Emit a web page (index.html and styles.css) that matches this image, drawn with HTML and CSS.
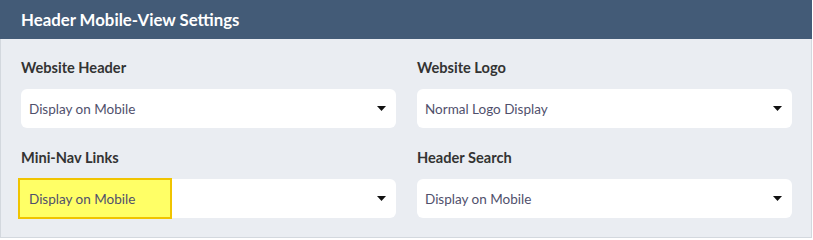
FILE: index.html
```html
<!DOCTYPE html>
<html lang="en">

<head>
    <meta charset="UTF-8">
    <meta name="viewport" content="width=device-width, initial-scale=1.0">
    <title>Header Mobile-View Settings</title>
    <link rel="stylesheet" href="styles.css">
</head>

<body>

    <div class="panel">
        <div class="panel-head">Header Mobile-View Settings</div>

        <div class="panel-body">
            <div class="field">
                <div class="label">Website Header</div>
                <div class="select">
                    <span class="value">Display on Mobile</span>
                    <svg class="caret" width="9" height="5" viewBox="0 0 9 5"><path d="M0 0h9L4.5 5z" /></svg>
                </div>
            </div>

            <div class="field">
                <div class="label">Website Logo</div>
                <div class="select">
                    <span class="value">Normal Logo Display</span>
                    <svg class="caret" width="9" height="5" viewBox="0 0 9 5"><path d="M0 0h9L4.5 5z" /></svg>
                </div>
            </div>

            <div class="field">
                <div class="label">Mini-Nav Links</div>
                <div class="select">
                    <span class="mark"></span>
                    <span class="value">Display on Mobile</span>
                    <svg class="caret" width="9" height="5" viewBox="0 0 9 5"><path d="M0 0h9L4.5 5z" /></svg>
                </div>
            </div>

            <div class="field">
                <div class="label">Header Search</div>
                <div class="select">
                    <span class="value">Display on Mobile</span>
                    <svg class="caret" width="9" height="5" viewBox="0 0 9 5"><path d="M0 0h9L4.5 5z" /></svg>
                </div>
            </div>
        </div>
    </div>

</body>

</html>
```

FILE: styles.css
```css
body {
    margin: 0;
    background-color: #ffffff;
    font-family: "Lato", "Open Sans", sans-serif;
}

.panel {
    width: 812px;
    box-sizing: border-box;
    background-color: #eaedf2;
    border: 1px solid #d3d8de;
    border-top: none;
}

.panel-head {
    height: 39px;
    line-height: 39px;
    margin: 0 -1px;
    padding-left: 21px;
    background-color: #435b77;
    color: #ffffff;
    font-size: 16.8px;
    font-weight: bold;
}

.panel-body {
    display: grid;
    grid-template-columns: 1fr 1fr;
    column-gap: 21px;
    row-gap: 20px;
    padding: 19px 19px 19px 20px;
}

.label {
    color: #333333;
    font-size: 14.6px;
    font-weight: bold;
    line-height: 20px;
    margin-bottom: 11px;
}

.select {
    position: relative;
    display: flex;
    align-items: center;
    justify-content: space-between;
    height: 39px;
    padding: 0 10px 0 8px;
    box-sizing: border-box;
    background-color: #ffffff;
    border-radius: 6px;
}

.value {
    position: relative;
    color: #50506c;
    font-size: 13.5px;
}

.caret {
    fill: #111111;
}

.mark {
    position: absolute;
    left: -3px;
    top: -1px;
    width: 154px;
    height: 41px;
    box-sizing: border-box;
    background-color: #ffff66;
    border: 2px solid #f0c400;
}
```
